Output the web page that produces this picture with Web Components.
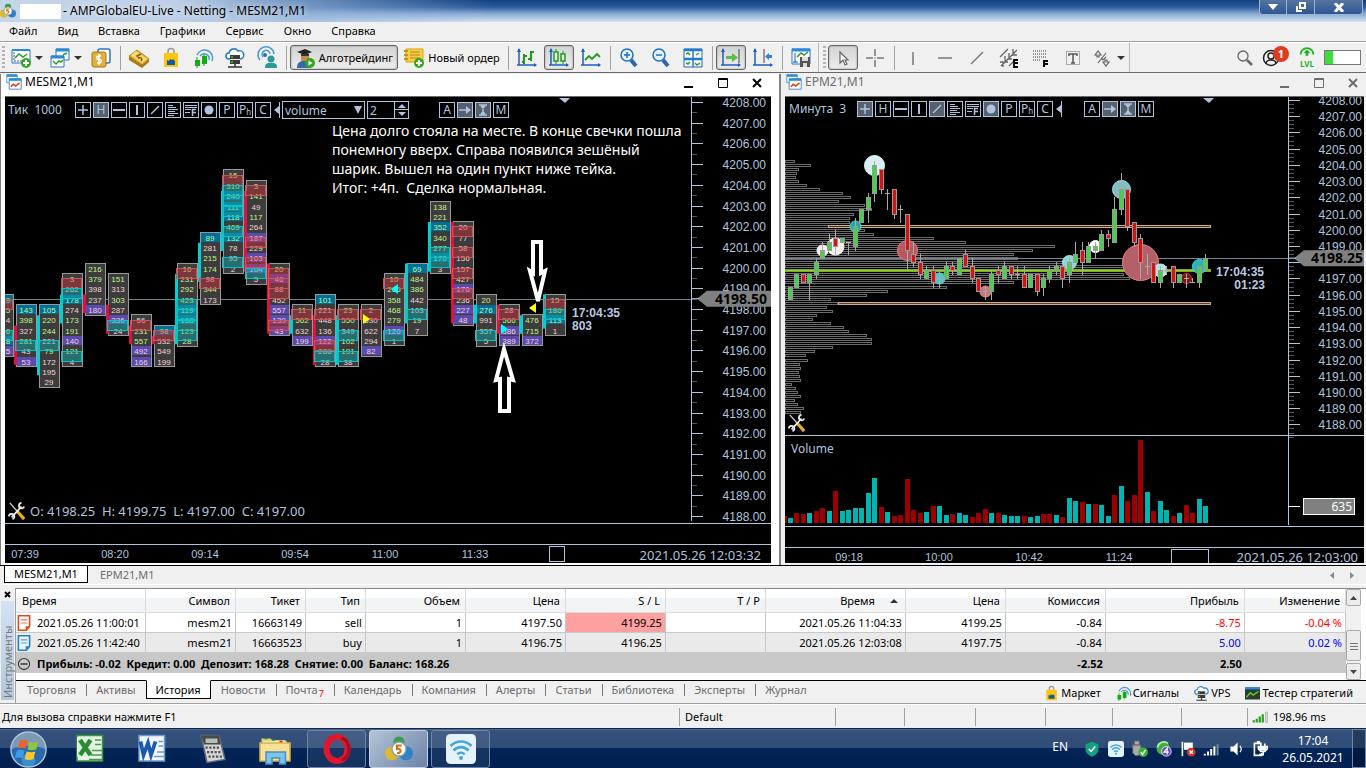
<!DOCTYPE html>
<html lang="ru">
<head>
<meta charset="utf-8">
<title>AMPGlobalEU-Live - Netting - MESM21,M1</title>
<style>
  html, body { margin: 0; height: 100%; }
  body { font: 11px/16px "Noto Sans", "Open Sans", sans-serif; color: #000; background: #f0f0f0; }
</style>
</head>
<body>
<terminal-app></terminal-app>

<script>
// ---------- icons ----------
const cloud = '<path d="M5 11H4a3 3 0 0 1 0-6 5 5 0 0 1 9-2 4 4 0 0 1 3 8h-1" fill="#fff" stroke="#1f7cc4" stroke-width="1.5"/><path d="M5 7h10v4H5zM5 12h10v4H5z" fill="#3c3c3c"/><path d="M6 9h2M6 14h2" stroke="#3c3" stroke-width="1.5"/><path d="M10 16v3M3 19h14" stroke="#333" stroke-width="1.5"/>';
const bag = '<path d="M7 6V3.500a3 3 0 0 1 6 0V6" fill="none" stroke="#999" stroke-width="1.500"/><path d="M3 5h14v14H3z" fill="#fcc60e"/><path d="M6 17v-5l2 1 1-2 2 1 1-1 2 2v4z" fill="#1458a8"/>';
const waves = '<path d="M4 7a8 8 0 0 1 15 6M7 8a5 5 0 0 1 9 4" fill="none" stroke="#4a9ad4" stroke-width="1.5"/>';
const plus = '<circle cx="15" cy="15" r="5" fill="#35a820"/><path d="M15 12v6M12 15h6" stroke="#fff" stroke-width="2"/>';
const axes = '<path d="M2 1v16M0 17h19" stroke="#1f5fc0" stroke-width="1.500"/><path d="M0 4l2-4 2 4zM17 15l3 2-3 2z" fill="#1f5fc0"/>';

const ICONS = {
  logo: '<circle cx="10" cy="5" r="4" fill="#3d9a50"/><circle cx="5" cy="13" r="5" fill="#dcb830"/><circle cx="15" cy="13" r="5" fill="#3280c8"/><circle cx="10" cy="10" r="5" fill="#fff" stroke="#7aa"/><path d="M12 7.500H8.500V10c3-1 4 3 0 3" fill="none" stroke="#e06a10" stroke-width="1.500"/>',
  newChart: '<path d="M1 2h18v13H1z" fill="#fff" stroke="#2a78c0"/><path d="M1 2h18" stroke="#2a8ad8" stroke-width="2"/><path d="M3 4v9h14" fill="none" stroke="#357" stroke-dasharray="2 1"/><path d="M4 10l4-4 4 3 4-3" fill="none" stroke="#2d9a22" stroke-width="1.500"/>' + plus,
  profiles: '<path d="M6 1h13v11H6z" fill="#fff" stroke="#2a78c0"/><path d="M6 2h13" stroke="#2a8ad8" stroke-width="3"/><path d="M1 8h13v11H1z" fill="#fff" stroke="#2a78c0"/><path d="M1 9h13" stroke="#2a8ad8" stroke-width="3"/><path d="M3 13l3 3 3-3 2 1 2-2M13 7l4-2" fill="none" stroke="#2d9a22" stroke-width="1.500"/>',
  dollar: '<rect x="7" y="1" width="12" height="14" rx="2" fill="#fff" stroke="#2a78c0" stroke-width="1.500"/><rect x="1" y="4" width="14" height="15" rx="2" fill="#e0b040" stroke="#a87808"/><path d="M10 8H7.500a1.500 1.500 0 0 0 0 3.500h1a1.500 1.500 0 0 1 0 3.500H6M8 6v11" fill="none" stroke="#fff" stroke-width="1.500"/>',
  gold: '<path d="M0 8l8-6 12 9-7 6z" fill="#e8bc40" stroke="#b88410"/><path d="M0 8v4l13 8v-3zM13 17v3l7-6v-3z" fill="#a87818"/><path d="M2 7l5-4 11 8-5 4z" fill="#f4d878"/><path d="M12 6L8 8l2 2c2-1 4 1 2 3" fill="none" stroke="#8a5a08" stroke-width="1.500"/>',
  bag, cloud,
  waves: waves + '<path d="M4 9v11M11 6v12" stroke="#1da01d"/><path d="M2 12h5v6H2zM9 8h5v8H9z" fill="#10b010"/>',
  people: '<path d="M3 12A8 8 0 1 1 17 6M6 9a4 4 0 1 1 7-3" fill="none" stroke="#4a9ad4" stroke-width="1.500"/><circle cx="8" cy="7" r="2" fill="#2470b0"/><circle cx="14" cy="11" r="3.500" fill="#2c9a94"/><path d="M8 20c0-5 2-5 6-5s6 0 6 5z" fill="#2c9a94"/>',
  algo: '<path d="M2 4l8-3 7 3-7 3z" fill="#222"/><path d="M6 6h8v5a4 4 0 0 1-8 0z" fill="#c98a50"/><path d="M2 20c0-6 3-7 8-7s6 2 6 7z" fill="#3568b0"/><path d="M6 6l8 0v2H6z" fill="#333"/><circle cx="15" cy="15" r="5" fill="#35a820"/><path d="M13.500 12.500v5l4-2.500z" fill="#fff"/>',
  order: '<path d="M2 1h17v13H2z" fill="#f8cf4a" stroke="#d8a010"/><path d="M0 3h4M0 7h4M0 11h4" stroke="#c89010" stroke-width="2"/><path d="M6 4h10M6 7h10M6 10h10" stroke="#b08010"/>' + plus,
  bars: axes + '<path d="M7 6v10M5 14h2M7 8h3M14 3v10M11 11h3M14 4h3" stroke="#1f9a1f" stroke-width="2" fill="none"/>',
  candles: axes + '<path d="M7 1v15M14 3v13" stroke="#1f9a1f"/><path d="M5 4h4v9H5zM12 6h4v7h-4z" fill="#eee" stroke="#1f9a1f" stroke-width="1.500"/>',
  line: axes + '<path d="M4 12l4-4 3 3 5-5 3 3" fill="none" stroke="#1f9a1f" stroke-width="1.800"/>',
  zoomIn: '<path d="M12 12l5 6" stroke="#2c68a8" stroke-width="4"/><circle cx="8" cy="7" r="6" fill="#e4f2fc" stroke="#2470c0" stroke-width="1.500"/><path d="M8 4v6M5 7h6" stroke="#2470c0" stroke-width="1.500"/>',
  zoomOut: '<path d="M12 12l5 6" stroke="#2c68a8" stroke-width="4"/><circle cx="8" cy="7" r="6" fill="#e4f2fc" stroke="#2470c0" stroke-width="1.500"/><path d="M5 7h6" stroke="#2470c0" stroke-width="1.500"/>',
  tile: '<path d="M1 1h18v18H1z" fill="#fff" stroke="#1f68b8"/><path d="M1 2h18M1 11h18" stroke="#1f78d0" stroke-width="2.500"/><path d="M10 1v18" stroke="#1f78d0" stroke-width="1.500"/><path d="M3 6l2-1 2 2M13 7l3-2M3 15l2 1 2-2M12 15l2 2 3-2" fill="none" stroke="#2d9a22" stroke-width="1.500"/>',
  scroll: axes + '<path d="M18 1v14" stroke="#444"/><path d="M5 8h6V5l6 4.500-6 4.500v-3H5z" fill="#58c040"/>',
  shift: axes + '<path d="M11 1v14" stroke="#444"/><path d="M19 7h-3V5l-4 3.500 4 3.500v-2h3z" fill="#3a80d8"/>',
  save: '<path d="M1 1h18v15H1z" fill="#fff" stroke="#2a78c0"/><path d="M1 2h18" stroke="#2a8ad8" stroke-width="3"/><path d="M4 5v10M2 14h5" stroke="#1f5fc0"/><path d="M6 9l4-4 3 2 4-3" fill="none" stroke="#2d9a22" stroke-width="1.500"/><path d="M9 9h10v10H9z" fill="#555"/><path d="M11 9h6v4h-6zM12 15h4v4h-4z" fill="#ddd"/>',
  cursor: '<path d="M7 4v11l3-3 2 5 2-1-2-4h3z" fill="#fff" stroke="#666" stroke-width="1.200"/>',
  cross: '<path d="M10 1v7M10 12v7M1 10h7M12 10h7M9.500 10h1" stroke="#777" stroke-width="1.500"/>',
  vline: '<path d="M10 4v13" stroke="#777" stroke-width="1.500"/>',
  hline: '<path d="M3 10h14" stroke="#777" stroke-width="1.500"/>',
  trend: '<path d="M4 16L16 4" stroke="#777" stroke-width="1.500"/>',
  channel: '<path d="M1 9l8-8M2 18L18 2M10 18l6-6M1 14h3v5M6 8v6h3M10 5v6h3M14 1v6h4" fill="none" stroke="#666" stroke-width="1.300"/><path d="M19 12h-4v7h4M15 15h4" fill="none" stroke="#000" stroke-width="1.800"/>',
  fibo: '<path d="M2 3h14M2 6h14M2 9h14M2 12h8" stroke="#777" stroke-width="1.500" stroke-dasharray="1 1"/><path d="M17 13h-4v6M13 16h4" fill="none" stroke="#000" stroke-width="2"/>',
  text: '<path d="M3.500 3.500h13v13h-13z" fill="none" stroke="#666" stroke-dasharray="1 1"/><path d="M6 8V6h8v2M10 6v9M8 15h4" fill="none" stroke="#555" stroke-width="1.500"/>',
  shapes: '<path d="M2 7l3-4 3 4H6v2H4V7zM12 12h2v2h2l-3 4-3-4h2zM5 15L13 5M8 10l2 2 3-3" fill="none" stroke="#666" stroke-width="1.200"/>',
  search: '<circle cx="8" cy="8" r="5" fill="none" stroke="#666" stroke-width="1.300"/><path d="M12 12l5 5" stroke="#666" stroke-width="2.500"/>',
  user: '<circle cx="8" cy="10" r="7.500" fill="none" stroke="#222" stroke-width="1.500"/><circle cx="8" cy="8" r="3" fill="none" stroke="#222" stroke-width="1.500"/><path d="M3 15c1-4 9-4 10 0" fill="none" stroke="#222" stroke-width="1.500"/>',
  lvl: '<path d="M1 12a9 9 0 0 1 18 0" fill="none" stroke="#1eb41e" stroke-width="2.500"/><path d="M10 5l5 5h-3v4H8v-4H5z" fill="#1eb41e"/>',
  chartTab: '<path d="M1 1h13v10H1z" fill="#fff" stroke="#2a8ad8"/><path d="M1 2h13" stroke="#2a8ad8" stroke-width="3"/><path d="M4 6h15v13H4z" fill="#fff" stroke="#2a78c0"/><path d="M4 7h15" stroke="#2a8ad8" stroke-width="3"/><path d="M6 16l3-3 3 2 5-4" fill="none" stroke="#e04818" stroke-width="2"/>',
  tester: '<path d="M0 2h20v16H0z" fill="#2c3c34"/><path d="M0 3h20" stroke="#2a8ad8" stroke-width="3"/><path d="M2 15l5-6 4 3 7-5" fill="none" stroke="#6c2" stroke-width="2"/>',
  tools: '<path d="M2 1l8 9" stroke="#ccc" stroke-width="1.500"/><path d="M10 10l8 9" stroke="#e8b020" stroke-width="3.500"/><path d="M4 17L15 5" stroke="#eee" stroke-width="2"/><path d="M18 5a3 3 0 1 1-3-4M1 16a3 3 0 1 1 4 3" fill="none" stroke="#eee" stroke-width="2"/>',
  signal: '<path d="M1 15v3M5 13v5M9 10v8M13 7v11" stroke="#2aa020" stroke-width="3"/><path d="M17 4h2v14h-2z" fill="none" stroke="#999"/>',
  sellDoc: '<path d="M3 1h14v13l-4 5H3z" fill="#fff" stroke="#e04818" stroke-width="2"/><path d="M6 6h8M6 10h8" stroke="#e87850" stroke-width="1.500"/><path d="M12 19v-5h5z" fill="#e04818"/>',
  buyDoc: '<path d="M3 1h14v13l-4 5H3z" fill="#e8f4fc" stroke="#2a80c0" stroke-width="2"/><path d="M6 6h8M6 10h8" stroke="#5aa0d0" stroke-width="1.500"/><path d="M12 19v-5h5z" fill="#2a80c0"/>',
  minus: '<circle cx="10" cy="10" r="8" fill="none" stroke="#333" stroke-width="1.500"/><path d="M5 10h10" stroke="#333" stroke-width="2"/>',
  excel: '<path d="M2 1h17v17H2z" fill="#e8f4e4" stroke="#389838"/><path d="M2 2h11v13H2z" fill="#dff0dc"/><path d="M4 4l7 10M11 4L4 14" stroke="#2d8a34" stroke-width="3"/><path d="M14 4h4M14 7h4M12 11h7M11 14h8M10 17h9" stroke="#4a9a50"/>',
  word: '<path d="M2 1h17v17H2z" fill="#f0f6fc" stroke="#6a9ad0"/><path d="M3 5l2 9 3-8 2 8 3-9" fill="none" stroke="#1c58ac" stroke-width="2.500"/><path d="M15 5h3M15 8h3M14 12h5M12 15h7" stroke="#6a9ad0"/>',
  calc: '<path d="M2 1h12l4 16-12 2z" fill="#d4d6d8" stroke="#667"/><path d="M2 1h12l1 6H4z" fill="#45484c"/><path d="M5 3h8v3H5z" fill="#b4c0b0"/><path d="M5 9h10M6 12h10M7 15h10" stroke="#555" stroke-width="1.500" stroke-dasharray="1.500 1"/>',
  folder: '<path d="M1 3h6l1 1h9v13H1z" fill="#e8cc70"/><path d="M2 5h16v3H2z" fill="#fff"/><path d="M0 6h20v12H0z" fill="#f8e094" stroke="#d0b050"/><path d="M4 20v-8h13v8h-4v-4H8v4z" fill="#7cc4ec" stroke="#4a90c0"/><path d="M3 3h2M8 4h2" stroke="#2a8a2a"/><path d="M13 5h2" stroke="#c22"/>',
  opera: '<ellipse cx="10" cy="10" rx="7" ry="8" fill="none" stroke="#e0182c" stroke-width="4"/><path d="M13 3a5 7 0 0 1 0 14" fill="none" stroke="#a80c1c" stroke-width="2"/>',
  wifi: '<rect x="0" y="0" width="20" height="20" rx="3" fill="#e4f2fa"/><path d="M3 8c4-4 10-4 14 0M5 11c3-3 7-3 10 0M7.500 13.500c2-1.500 3-1.500 5 0" fill="none" stroke="#4aa4dc" stroke-width="1.700"/><circle cx="10" cy="16" r="1.300" fill="#4aa4dc"/>',
  orb: '<circle cx="20" cy="20" r="18" fill="#2a6aa8"/><path d="M2 20a18 18 0 0 1 36 0c-10-5-26-5-36 0z" fill="#7c98b4"/><circle cx="20" cy="31" r="7" fill="#40b8f0" opacity=".5"/><circle cx="20" cy="20" r="18" fill="none" stroke="#a8c4dc" stroke-width="1.500"/><path d="M11 11c3-1.500 5-1 8 0l-2 8c-3-1-5-1-8 0z" fill="#f0602c"/><path d="M21 12c3 1 5 1 9 0l-2 8c-4 1-6 1-9 0z" fill="#8cc83c"/><path d="M8 21c3-1 5-1 8 0l-2 8c-3-1-5-1-8 0z" fill="#3c9cec"/><path d="M18 22c4 1 6 1 9 0l-2 8c-3 1-6 1-9 0z" fill="#fcc830"/>',
  shield: '<path d="M10 1l8 3v7c0 5-5 7-8 9-3-2-8-4-8-9V4z" fill="#12a080"/><path d="M6 10l3 3 5-6" fill="none" stroke="#fff" stroke-width="2"/>',
  usb: '<path d="M3 0h6v5H3zM1 5h10v10l-3 3H4l-3-3z" fill="#aaa" stroke="#666"/><circle cx="14" cy="14" r="6" fill="#38b030"/><path d="M11 14l2 3 4-6" fill="none" stroke="#fff" stroke-width="1.800"/>',
  four: '<circle cx="9" cy="9" r="8.500" fill="#40b040"/><path d="M2 8a8 8 0 0 1 13-5" fill="none" stroke="#b8f0b0" stroke-width="2"/><circle cx="13" cy="13" r="6" fill="#6848c0" stroke="#fff"/><path d="M14 17V9l-4 5h6" fill="none" stroke="#fff" stroke-width="1.500"/>',
  flag: '<path d="M3 1v18" stroke="#fff" stroke-width="2"/><path d="M5 2h11v9H5z" fill="#fff"/><circle cx="14" cy="14" r="5.500" fill="#d83020"/><path d="M12 12l4 4M16 12l-4 4" stroke="#fff" stroke-width="1.800"/>',
  net: '<path d="M1 18v-2M5 18v-5M9 18V10M13 18V7" stroke="#fff" stroke-width="2.500"/><path d="M17 18V4" stroke="#789" stroke-width="2.500"/>',
  speaker: '<path d="M3 7h4l5-5v16l-5-5H3z" fill="#fff"/><path d="M15 6q3 4 0 8" fill="none" stroke="#fff" stroke-width="1.500"/>',
  plug: '<path d="M12 3H3v15h9v-3M6 1h4" fill="none" stroke="#fff" stroke-width="2"/><path d="M8 7h11v3l-3 3h-5l-3-3zM11 3v4M16 3v4M14 13v4h-5" fill="none" stroke="#fff" stroke-width="2"/><path d="M9 7h9v3l-2 2h-5l-2-2z" fill="#fff"/>'
};

class MtIcon extends HTMLElement {
  connectedCallback() {
    const name = this.getAttribute('name');
    const box = name === 'orb' ? 40 : 20;
    this.attachShadow({ mode: 'open' }).innerHTML = `
      <style>
        :host { display: inline-flex; width: var(--icon, 20px); height: var(--icon, 20px); flex: none; }
        svg { width: 100%; height: 100%; display: block; overflow: visible; }
      </style>
      <svg viewBox="0 0 ${box} ${box}" fill="none" aria-hidden="true">${ICONS[name]}</svg>`;
  }
}
customElements.define('mt-icon', MtIcon);

// ---------- title and menu ----------
class TitleBar extends HTMLElement {
  connectedCallback() {
    this.attachShadow({ mode: 'open' }).innerHTML = `
      <style>
        :host {
          display: flex; height: 22px; align-items: center; padding-left: 0;
          font-size: 12px;
          background:
            linear-gradient(90deg, #c6d6e8 0, #bccfe6 13%, rgba(150, 180, 218, .7) 22%, rgba(120, 160, 210, 0) 36%),
            linear-gradient(#12407f 0, #2b5b9c 32%, #86a9d2 62%, #d4e3f2 100%);
        }
        mt-icon { --icon: 16px; }
        .name { width: 41px; height: 15px; margin: 0 2px 0 4px; background: #fff; }
        .title { flex: 1; text-shadow: 0 0 6px #fff; }
        .buttons { display: flex; align-self: flex-start; margin-right: 3px; height: 15px; }
        button {
          padding: 0; width: 28px; border: 1px solid #9ab4d6; border-top: 0; border-left-width: 0;
          background: linear-gradient(#56759f, #2d5692); display: grid; place-items: center;
        }
        button:first-child { border-left-width: 1px; border-radius: 0 0 0 4px; }
        button:last-child { width: 48px; border-radius: 0 0 4px 0; }
      </style>
      <mt-icon name="logo"></mt-icon><span class="name"></span>
      <span class="title">- AMPGlobalEU-Live - Netting - MESM21,M1</span>
      <div class="buttons">
        <button aria-label="Свернуть"><svg width="10" height="6"><path d="M0 0h10L5 6z" fill="#fff"/></svg></button>
        <button aria-label="Восстановить"><svg width="10" height="10" fill="none" stroke="#fff" stroke-width="2"><path d="M4 1h5v5H4zM1 4v5h5"/></svg></button>
        <button aria-label="Закрыть"><svg width="10" height="9" stroke="#fff" stroke-width="3"><path d="M1 0l8 9M9 0L1 9"/></svg></button>
      </div>`;
  }
}
customElements.define('title-bar', TitleBar);

class MenuBar extends HTMLElement {
  connectedCallback() {
    const items = ['Файл', 'Вид', 'Вставка', 'Графики', 'Сервис', 'Окно', 'Справка'];
    this.attachShadow({ mode: 'open' }).innerHTML = `
      <style>
        :host { display: flex; gap: 20px; height: 19px; padding-left: 9px; align-items: center; border-bottom: 1px solid #a0a0a0; }
        button { border: 0; padding: 0 0 1px; background: none; font: inherit; color: #000; }
      </style>
      ${items.map(i => `<button>${i}</button>`).join('')}`;
  }
}
customElements.define('menu-bar', MenuBar);

// ---------- toolbar ----------
class ToolBar extends HTMLElement {
  connectedCallback() {
    const b = (icon, label, cls = '') => `<button class="${cls}" aria-label="${label}"><mt-icon name="${icon}"></mt-icon></button>`;
    const drop = (icon, label) => `<button class="drop" aria-label="${label}"><mt-icon name="${icon}"></mt-icon><i></i></button>`;
    const sep = '<span class="sep"></span>';
    this.attachShadow({ mode: 'open' }).innerHTML = `
      <style>
        :host { display: flex; height: 29px; align-items: center; border-top: 1px solid #fff; border-bottom: 1px solid #696969; white-space: nowrap; }
        .group { display: flex; gap: 2px; align-items: center; border-right: 1px solid #bbb; height: 100%; padding: 0 2px; }
        .group + .group { padding-left: 4px; }
        .grip { width: 3px; height: 24px; background: repeating-linear-gradient(#b4b4b4 0 2px, transparent 2px 4px); }
        button {
          box-sizing: border-box; width: 30px; height: 25px; padding: 0; border: 1px solid transparent;
          background: none; display: flex; align-items: center; justify-content: center; font: inherit; color: #000;
        }
        .drop { width: 37px; gap: 4px; }
        .drop:first-of-type { margin-left: 1px; }
        .drop i { border: 4px solid transparent; border-top-color: #333; border-bottom: 0; }
        .on { border: 1px solid #666; border-radius: 3px; background: linear-gradient(#d4d4d4, #ececec); box-shadow: inset 0 0 2px #888; }
        .label { width: 108px; gap: 4px; }
        .order { width: 104px; }
        .sep { width: 1px; height: 24px; margin: 0 1px 0 2px; background: #a0a0a0; }
        .right { margin-left: auto; display: flex; align-items: center; gap: 5px; padding-right: 5px; }
        .right button { width: 24px; }
        .right .user { position: relative; width: 28px; justify-content: flex-start; }
        .badge { position: absolute; right: 0; top: 0; width: 16px; height: 16px; border-radius: 8px; background: #e03a20; color: #fff; font: bold 11px/16px "Noto Sans", sans-serif; text-align: center; }
        .right .lvl { flex-direction: column; justify-content: flex-start; color: #1eb41e; font: bold 8px/8px "Noto Sans", sans-serif; }
        .lvl mt-icon { --icon: 18px; height: 14px; }
        .meter { width: 35px; height: 13px; border: 1px solid #777; background: linear-gradient(90deg, #3fdc3f 24%, #fff 24%); }
      </style>
      <div class="group">
        <span class="grip"></span>
        ${drop('newChart', 'Новый график')}${drop('profiles', 'Профили')}${b('dollar', 'Символы')}${sep}
        ${b('gold', 'MQL5')}${b('bag', 'Маркет')}${b('waves', 'Сигналы')}${b('cloud', 'VPS')}${b('people', 'Сообщество')}${sep}
        <button class="label on"><mt-icon name="algo"></mt-icon>Алготрейдинг</button>
        <button class="label order"><mt-icon name="order"></mt-icon>Новый ордер</button>${sep}
        ${b('bars', 'Бары')}${b('candles', 'Свечи', 'on')}${b('line', 'Линия')}${sep}
        ${b('zoomIn', 'Увеличить')}${b('zoomOut', 'Уменьшить')}${b('tile', 'Окна плиткой')}${sep}
        ${b('scroll', 'Автопрокрутка', 'on')}${b('shift', 'Сдвиг графика')}${sep}
        ${b('save', 'Шаблоны')}
      </div>
      <div class="group">
        <span class="grip"></span>
        ${b('cursor', 'Курсор', 'on')}${b('cross', 'Перекрестие')}${sep}
        ${b('vline', 'Вертикальная линия')}${b('hline', 'Горизонтальная линия')}${b('trend', 'Трендовая линия')}${b('channel', 'Канал')}${b('fibo', 'Фибоначчи')}${b('text', 'Текст')}${drop('shapes', 'Фигуры')}
      </div>
      <div class="right">
        ${b('search', 'Поиск')}
        <button class="user" aria-label="Аккаунт"><mt-icon name="user"></mt-icon><span class="badge">1</span></button>
        <button class="lvl"><mt-icon name="lvl"></mt-icon>LVL</button>
        <span class="meter"></span>
      </div>`;
  }
}
customElements.define('tool-bar', ToolBar);

// ---------- chart window ----------
class ChartWindow extends HTMLElement {
  connectedCallback() {
    this.attachShadow({ mode: 'open' }).innerHTML = `
      <style>
        :host { display: flex; flex-direction: column; min-width: 0; background: #f0f0f0; color: #6d6d6d; padding: 0 2px 2px 4px; border-left: 1px solid #808080; }
        :host([active]) { background: #fff; color: #000; padding-right: 8px; border-right: 1px solid #808080; }
        header { display: flex; height: 22px; align-items: center; font-size: 12px; border-bottom: 1px solid #696969; }
        header mt-icon { --icon: 16px; margin: 0 3px 6px 1px; }
        b { flex: 1; font-weight: normal; padding-bottom: 6px; }
        nav { display: flex; gap: 22px; padding: 0 5px 5px 0; }
        :host([active]) nav { padding-right: 8px; }
        button { border: 0; background: none; padding: 0; width: 12px; height: 12px; color: inherit; }
        svg { display: block; }
        ::slotted(*) { flex: 1; min-height: 0; }
      </style>
      <header>
        <mt-icon name="chartTab"></mt-icon><b>${this.getAttribute('caption')}</b>
        <nav>
          <button aria-label="Свернуть"><svg width="12" height="12" stroke="currentColor" stroke-width="2"><path d="M1 10h9"/></svg></button>
          <button aria-label="Развернуть"><svg width="12" height="12" fill="none" stroke="currentColor"><path d="M1.500 1.500h9v9h-9zM1 2.500h10"/></svg></button>
          <button aria-label="Закрыть"><svg width="12" height="12" stroke="currentColor" stroke-width="2"><path d="M2 2l8 8M10 2l-8 8"/></svg></button>
        </nav>
      </header>
      <slot></slot>`;
  }
}
customElements.define('chart-window', ChartWindow);

// row of small drawing buttons over the chart
class ChartTools extends HTMLElement {
  connectedCallback() {
    const on = (this.getAttribute('on') || '').split(' ');
    const g = d => `<svg width="14" height="14" fill="none" stroke="currentColor" stroke-width="1.500">${d}</svg>`;
    const tools = {
      plus: g('<path d="M7 2v10M2 7h10"/>'), H: 'H',
      hor: g('<path d="M1 7h12" stroke-width="2"/>'), ver: g('<path d="M7 2v10" stroke-width="2"/>'), diag: g('<path d="M3 11l8-8"/>'),
      prof: g('<path d="M2 2.500h5M2 4.500h8M2 6.500h10M2 8.500h7M2 10.500h10M2 12.500h6" stroke-width="1"/>'),
      fib: g('<path d="M1 2.500h12M1 4.500h12M1 6.500h6M1 9.500h5" stroke-width="1"/><path d="M12 6.500H8.500V13M9 9.500h3"/>'),
      dot: g('<circle cx="7" cy="7" r="4.500" fill="currentColor" stroke="none"/>'),
      P: 'P', Ph: 'P<small>h</small>', C: 'C'
    };
    const right = { A: 'A', arrow: g('<path d="M1 7h8"/><path d="M8 3l5 4-5 4z" fill="currentColor" stroke="none"/>'), I: g('<path d="M3 2h8M3 12h8M7 2v10M5 3l2 2 2-2M5 11l2-2 2 2"/>'), M: 'M' };
    const draw = set => Object.keys(set).map(k => `<button aria-label="${k}" class="${on.includes(k) ? 'on' : ''}">${set[k]}</button>`).join('');
    this.attachShadow({ mode: 'open' }).innerHTML = `
      <style>
        :host { position: absolute; left: 3px; top: 4px; display: flex; align-items: center; color: #b0c4de; font-size: 12px; --gap: 30px; }
        .period { width: 67px; white-space: pre; }
        :host([narrow]) { left: 4px; --gap: 20px; }
        :host([narrow]) .period { width: 68px; }
        .set { display: flex; gap: 2px; }
        button { box-sizing: border-box; width: 16px; height: 16px; padding: 0; border: 1px solid #b0c4de; background: #000; color: #b0c4de; font: 12px/14px "Noto Sans", sans-serif; display: flex; justify-content: center; align-items: center; }
        button.on { background: #56616f; }
        small { font-size: 8px; align-self: flex-end; line-height: 10px; }
        .more { width: 7px; margin: 0 2px; border-width: 0 1px 0 0; }
        select, input { box-sizing: border-box; height: 18px; border: 1px solid #b0c4de; background: #000; color: #b0c4de; font: 12px "Noto Sans", sans-serif; border-radius: 0; padding: 0; margin: 0; outline: 0; }
        select { width: 83px; appearance: none; padding-left: 2px; }
        .pick { position: relative; display: flex; }
        .pick svg { position: absolute; right: 3px; top: 5px; pointer-events: none; }
        input { width: 28px; padding-left: 2px; margin-left: 2px; }
        .spin { display: grid; }
        .spin button { width: 14px; height: 9px; border-left: 0; }
        .spin button + button { border-top: 0; }
        .last { margin-left: var(--gap); }
      </style>
      <span class="period">${this.getAttribute('period')}</span>
      <div class="set">${draw(tools)}</div>
      <button class="more" aria-label="Скрыть"><svg width="5" height="8"><path d="M5 0v8L0 4z" fill="#b0c4de"/></svg></button>
      <slot></slot>
      ${this.hasAttribute('narrow') ? '' : `
      <span class="pick"><select aria-label="Источник"><option>volume</option></select><svg width="8" height="8"><path d="M0 0h8L4 8z" fill="#b0c4de"/></svg></span>
      <input aria-label="Размер" value="2">
      <span class="spin"><button aria-label="Больше"><svg width="8" height="4"><path d="M0 4l4-4 4 4z" fill="#b0c4de"/></svg></button><button aria-label="Меньше"><svg width="8" height="4"><path d="M0 0l4 4 4-4z" fill="#b0c4de"/></svg></button></span>`}
      <div class="set last">${draw(right)}</div>`;
  }
}
customElements.define('chart-tools', ChartTools);

const CHART_CSS = `
  :host { display: block; position: relative; background: #000; overflow: hidden; }
  svg.plot { display: block; width: 100%; height: 100%; font-family: "Liberation Sans", sans-serif; font-size: 12px; fill: #b0c4de; }
  .line { stroke: #b0c4de; }
  .ui { font-family: "Noto Sans", sans-serif; }
  .time { font-size: 11px; text-anchor: middle; }
  .clock { font-weight: bold; font-size: 12px; fill: #b8cbe4; }
  .dark { fill: #000; }`;

// price scale; drawn leftwards from the right edge
function scale({ y, step, axisX, bottom, tag, inset }) {
  let out = `<path class="line" d="M-${axisX - .5} 0V${bottom}"/>`;
  for (let p = 4208; p >= 4188; p--) {
    const py = Math.round(y(p)) + .5;
    out += `<path class="line" d="M-${axisX} ${py}h12"/>`;
    // the price tag covers a label that is nearer than half a point
    if (Math.abs(p - tag) >= .5) out += `<text x="-${inset}" y="${py + 4}" text-anchor="end">${p}.00</text>`;
    for (let k = 1; k < step; k++) {
      const q = Math.round(y(p - k / step)) + .5;
      if (q < bottom) out += `<path d="M-${axisX - 1} ${q}h5" stroke="#555"/>`;
    }
  }
  const t = y(+tag);
  out += `<path d="M-${axisX - 6} ${t}l10 -8H0v16H-${axisX - 16}z" fill="#808080"/><path d="M-${axisX} ${t}h8" class="line"/>
    <text class="ui" x="-${inset - 1}" y="${t + 5}" text-anchor="end" font-size="14" font-weight="bold" fill="#000">${tag}</text>`;
  return out;
}

// ---------- footprint chart ----------
// column: first row, cells "volume + g|p (text colour) + b|v (fill)", side bar [colour, from, to], zones
const CLUSTERS = [
  [3, '9gb 5g 4p 6g 8gb 5pv', null, 'r3.5 c6.5'],
  [4, '143gb 398g 327p 281g 43p 53pv', ['r', 5.6, 9.4], 'c7.5'],
  [4, '105gb 220g 244g 221p 79g 172p 195p 29p', ['c', 4.6, 10.4], 'c7.5'],
  [1, '3g 262p 178gb 274p 173g 191g 140pv 121g 4p', ['c', 2.6, 5.4], 'r1.5 c2.5 c8.5'],
  [0, '216g 379g 398p 237p 180pv', ['r', 2.6, 4.4], ''],
  [1, '151g 313p 303g 287p 336pv 24p', ['r', 3.6, 6.4], 'c5.5'],
  [5, '56p 231g 557g 492pv 166pv', ['r', 5.6, 7.4], 'r5.5'],
  [6, '98gb 532p 549p 199p', ['r', 6.6, 7.4], 'r6.5'],
  [0, '16g 231g 292g 423g 119gb 168gb 123g 28g', ['c', .6, 7.4], 'r.5 c3.5 c4.5 c5.5 c6.5'],
  [-3, '89gb 281p 215g 174g 98p 344g 173p', ['c', -2.4, 1.4], 'r1.5'],
  [-9, '15g 310g 240gb 111gb 118gb 469g 132gb 78p 95p 2p', ['c', -7.4, -1.6], 'r-8.5 c-7.5 c-6.5 c-5.5 c-3.5 c-.5'],
  [-8, '3g 141g 49p 117g 264p 187pv 229p 163pv 164pv 5p', ['r', -7.4, .4], 'r-7.5 r-2.5 r-.5 c.5'],
  [0, '20g 46pv 88p 452p 557pv 139pv 43pv', ['r', -.4, 6.4], 'r.5 r1.5 r2.5 r5.5'],
  [4, '11g 562g 632p 199pv', ['c', 4.6, 6.4], 'r4.5'],
  [3, '101gb 221p 448p 136p 122pv 286p 28p', ['r', 4.6, 9.4], 'r4.5 r7.5 c8.5'],
  [4, '23g 550g 349p 102g 191g 38p', ['c', 4.6, 9.4], 'r4.5 c6.5 c8.5'],
  [4, '2g 530p 622p 294p 82pv', null, 'r4.5'],
  [1, '10g 265g 358g 468g 279g 126pv 1p', null, 'r1.5 c6.5'],
  [0, '69gb 484g 386g 442p 103p 19g 7p', ['c', -.4, 5.4], 'c4.5'],
  [-6, '138g 221g 352gb 340g 277g 170gb 3p', ['c', -4.4, .4], 'c-1.5 c-.5'],
  [-4, '20p 77p 58p 156p 157p 427p 176pv 236p 227pv 48pv', ['r', -4.4, 5.4], 'r-3.5 r-1.5 r.5 r2.5'],
  [3, '20g 276gb 991p 357p 5p', ['c', 3.6, 5.4], 'c6.5'],
  [4, '28p 566g 586pv 389pv', ['r', 3.6, 6.4], 'r4.5'],
  [5, '476g 715g 372pv', ['c', 4.6, 6.4], ''],
  [3, '15g 186g 113gb 1p', ['c', 2.6, 5.9], 'r3.5 c4.5']
];

class FootprintChart extends HTMLElement {
  connectedCallback() {
    const y = p => 5 + (4208 - p) * 20.7;
    const row = r => y(4200 - r / 2);
    const fills = { b: '#00709a', v: '#5a4aae' };
    const zone = { r: ['#d8303c', '#c8555a'], c: ['#10b4b4', '#00c4c8'] };
    const clusters = CLUSTERS.map(([top, list, bar, zones], i) => {
      const x = Math.round(-12 + i * 23);
      const cells = list.split(' ');
      const t = Math.round(row(top) - 5), h = Math.round(cells.length * 10.35);
      let out = `<rect x="${x + .5}" y="${t + .5}" width="20" height="${h}" fill="#3c3c3c" stroke="#999"/>`;
      cells.forEach((c, k) => {
        const m = c.match(/(\d+)([gp])([bv]?)/);
        const cy = Math.round(row(top + k));
        if (m[3]) out += `<rect x="${x + 1}" y="${cy - 4}" width="19" height="9" fill="${fills[m[3]]}"/>`;
        out += `<text x="${Math.max(x + 10, 3)}" y="${cy + 4}" fill="${m[2] === 'g' ? '#c4f48c' : '#f4d4d4'}">${m[1]}</text>`;
      });
      if (bar) out += `<path d="M${x - .5} ${row(bar[1])}V${row(bar[2])}" stroke="${bar[0] === 'r' ? '#e01040' : '#00d0d0'}" stroke-width="3"/>`;
      zones.split(' ').filter(Boolean).forEach(z => {
        const [f, s] = zone[z[0]];
        out += `<rect x="${x - .5}" y="${Math.round(row(+z.slice(1))) - 4.500}" width="20" height="10" fill="${f}" fill-opacity=".42" stroke="${s}"/>`;
      });
      return out;
    }).join('');
    const times = ['07:39', '08:20', '09:14', '09:54', '11:00', '11:33'].map((t, i) => `<text class="time" x="${20 + i * 90}" y="461">${t}</text>`).join('');
    const note = ['Цена долго стояла на месте. В конце свечки пошла', 'понемногу вверх. Справа появился зешёный', 'шарик. Вышел на один пункт ниже тейка.', 'Итог: +4п.  Сделка нормальная.']
      .map((t, i) => `<text class="ui note" x="327" y="${39 + i * 19}">${t}</text>`).join('');
    this.attachShadow({ mode: 'open' }).innerHTML = `
      <style>${CHART_CSS}
        .cells { font-size: 8px; text-anchor: middle; }
        .note { font-size: 14px; fill: #fff; white-space: pre; }
        .ohlc { position: absolute; left: 3px; top: 405px; display: flex; gap: 4px; align-items: center; color: #b0c4de; font-size: 13px; white-space: pre; }
        .ohlc mt-icon { --icon: 18px; }
      </style>
      <svg class="plot">
        <path d="M0 202.500H3000" stroke="#78828f"/>
        <g class="cells">${clusters}</g>
        <path d="M358 217v10l7-5z" fill="#ff0"/><path d="M393 187v10l-7-5z" fill="#0ff"/>
        <path d="M496 227v10l7-5z" fill="#0ff"/><path d="M531 206v10l-7-5z" fill="#ff0"/>
        <path d="M528 145h8v31l4-2-7 30-8-30 3 2z" class="dark" stroke="#fff" stroke-width="4"/>
        <path d="M495 314h9v-32l4 1-9-31-8 31 4-1z" class="dark" stroke="#fff" stroke-width="4"/>
        ${note}
        <text class="clock" x="567" y="220">17:04:35</text><text class="clock" x="567" y="233">803</text>
        <path d="M554 1h11l-5 5z"/>
        <svg x="100%" overflow="visible">
          <rect class="dark" x="-79" y="0" width="79" height="426"/>
          ${scale({ y, step: 2, axisX: 80, bottom: 424, tag: '4198.50', inset: 5 })}
          <text class="ui" x="-10" y="463" text-anchor="end" font-size="13">2021.05.26 12:03:32</text>
        </svg>
        <path class="line" d="M0 426.500H3000M0 447.500H3000"/>
        ${times}
        <rect x="544.500" y="449.500" width="15" height="15" class="line dark"/>
      </svg>
      <chart-tools period="Тик  1000" on="H arrow I"></chart-tools>
      <div class="ohlc"><mt-icon name="tools"></mt-icon><span>O: 4198.25  H: 4199.75  L: 4197.00  C: 4197.00</span></div>`;
  }
}
customElements.define('footprint-chart', FootprintChart);

// ---------- candle chart ----------
// ticks down from 4208: colour, body top, body bottom, high, low; "d" is a doji
const CANDLES = `g 46 49 46 49|g 43 46 43 46|r 43 45 43 45|g 43 45 43 49|g 40 43 39 44|g 37 39 35 39|g 35 37 33 37|r 34 36 32 38|g 34 35 34 35|d 35 35 35 38
g 31 36 29 37|g 27 30 27 30|g 24 27 23 30|g 16 23 15 25|r 17 22 17 23|d 23 23 22 27|r 22 28 22 29|d 27 27 26 30|r 28 37 28 42|r 38 40 35 41
r 40 43 38 44|g 42 44 41 44|r 42 45 41 46|d 44 44 42 46|g 41 44 40 44|r 41 42 40 43|g 39 43 39 43|r 38 41 37 41|r 41 44 39 45|r 44 47 44 47
d 47 47 46 49|g 43 47 42 49|r 42 43 41 45|g 41 44 40 44|r 41 43 41 44|d 43 43 41 44|r 43 46 41 46|g 43 46 43 46|r 43 47 43 48|g 44 46 43 48
g 42 44 41 45|g 41 42 40 43|r 41 44 41 46|g 40 43 39 45|g 38 40 35 40|r 37 40 35 43|g 36 40 35 40|g 36 37 35 39|g 33 37 32 37|r 33 34 32 36
g 27 35 24 35|g 22 27 18 28|r 22 31 22 32|r 30 35 30 36|r 34 40 33 44|d 41 41 38 43|r 40 45 40 45|g 42 45 41 46|d 42 42 41 43|r 41 45 41 46
g 43 45 43 45|d 44 44 43 46|d 45 45 44 45|g 41 45 41 46|g 39 42 38 42`.split(/[|\n]/).map(s => s.split(' '));

const VOLUMES = 'r7 c5 r10 r9 c10 r12 r15 c12 r32 c12 c13 c15 c15 c30 c45 r16 c11 r7 r8 r44 r13 r10 c11 r17 c17 c8 r9 c10 c8 r6 r10 r14 c10 r10 c8 c7 c7 r7 c6 c7 r9 r9 c8 r6 c25 c22 r21 c19 r19 c18 c7 r28 c37 r22 r28 r83 c31 r12 c22 c13 r7 c10 r18 r10 c24 c17'.split(' ');

const PROFILE = [9, 25, 13, 11, 10, 13, 21, 34, 57, 65, 53, 79, 86, 68, 64, 64, 64, 79, 88, 148, 180, 269, 247, 228, 232, 290, 360, 318, 338, 344, 228, 161, 102, 81, 45, 52, 41, 47, 31, 27, 45, 58, 63, 81, 86, 86, 47, 29, 20, 22, 14, 15, 13, 14, 15, 6, 10, 12, 15, 9, 12, 18, 15];

class CandleChart extends HTMLElement {
  connectedCallback() {
    const y = p => 3 + (4208 - p) * 16.22;
    const ty = t => Math.round(y(4208 - t / 4));
    const cx = i => Math.round(5 + (i - 1) * 6.487);
    const candles = CANDLES.map(([k, t, b, hi, lo], n) => {
      const x = cx(n + 1);
      const wick = `<path d="M${x + .5} ${ty(+hi)}V${ty(+lo) + 1}" stroke="#aaa"/>`;
      if (k === 'd') return wick + `<path d="M${x - 2} ${ty(+t) + .5}h5" stroke="#aaa"/>`;
      return wick + `<rect x="${x - 1.500}" y="${ty(+t) + .5}" width="4" height="${ty(+b) - ty(+t)}" fill="${k === 'g' ? '#46d246' : '#dc1010'}" stroke="#999"/>`;
    }).join('');
    const profile = PROFILE.map((w, i) => `<rect x=".5" y="${ty(15 + i) - .5}" width="${w}" height="2" class="dark" stroke="#6c6c6c"/>`).join('');
    const volumes = VOLUMES.map((v, i) => `<rect x="${cx(i) - 2}" y="${426 - v.slice(1)}" width="5" height="${v.slice(1)}" fill="${v[0] === 'r' ? '#9c0000' : '#00b4b4'}"/>`).join('');
    // candle index, tick, radius, fill, ring
    const bubbles = [[6, 37, 5.5, '#fbeeee', '#fff'], [8, 36, 8.5, '#fbeeee', '#fff'], [11, 31, 5.5, '#2aa4a8', '#50e0e0'], [14, 16, 10, '#d8eef0', '#e8ffff'], [19, 37, 10, '#b85860', '#f08080'], [24, 44, 5.5, '#50c4c8', '#50e0e0'], [31, 47, 5.5, '#c87880', '#f09090'], [44, 40, 7, '#90d4d8', '#a0f0f0'],
      [48, 36, 6, '#fff', '#fff'], [52, 22, 9, '#80bcc0', '#90f0f0'], [55, 40, 18, '#b46068', '#f08080'], [58, 42, 6.5, '#b8e0e4', '#c0f0f0'], [62, 44, 5, '#701818', '#e03030'], [64, 41, 7, '#28b4b8', '#40e8e8']]
      .map(([i, t, r, f, s]) => `<circle cx="${cx(i) + .5}" cy="${ty(t) + .5}" r="${r}" fill="${f}" stroke="${s}"/>`).join('');
    const band = (t, x, c, f) => `<rect x="${x}.500" y="${ty(t) - .5}" width="${425 - x}" height="2" fill="${f}" stroke="${c}"/>`;
    const times = ['09:18', '10:00', '10:42', '11:24'].map((t, i) => `<text class="time" x="${64 + i * 90}" y="464">${t}</text>`).join('');
    this.attachShadow({ mode: 'open' }).innerHTML = `
      <style>${CHART_CSS}
        .settings { position: absolute; left: 3px; top: 317px; }
        .settings mt-icon { --icon: 18px; }
        .tag { fill: #808080; stroke: #fff; }
      </style>
      <svg class="plot">
        ${profile}
        ${band(31, 43, '#d0b080', '#3c2c28')}${band(50, 53, '#d0b080', '#5c3c30')}${band(42, 0, '#80a830', '#90d020')}
        <path d="M0 161.500H3000" stroke="#78869c"/>
        ${bubbles}${candles}
        <text class="clock" x="431" y="179">17:04:35</text><text class="clock" x="480" y="192" text-anchor="end">01:23</text>
        <path d="M418 1h11l-5 5z"/>
        <text class="ui" x="6" y="356">Volume</text>
        ${volumes}
        <svg x="100%" overflow="visible">
          <rect class="dark" x="-75" y="0" width="75" height="338"/>
          ${scale({ y, step: 4, axisX: 76, bottom: 428, tag: '4198.25', inset: 2 })}
          <path d="M-76 409.500h12" stroke="#fff"/>
          <rect class="tag" x="-60.500" y="401.500" width="51" height="16"/>
          <text class="ui" x="-12" y="414" text-anchor="end" fill="#fff">635</text>
          <text class="ui" x="-6" y="465" text-anchor="end" font-size="13">2021.05.26 12:03:00</text>
        </svg>
        <path class="line" d="M0 338.500H3000M0 429.500H3000M0 450.500H3000"/>
        ${times}
        <rect x="386.500" y="452.500" width="37" height="14" class="line dark"/>
      </svg>
      <chart-tools narrow period="Минута  3" on="plus diag dot arrow I"></chart-tools>
      <div class="settings"><mt-icon name="tools"></mt-icon></div>`;
  }
}
customElements.define('candle-chart', CandleChart);

// ---------- chart tabs ----------
class ChartTabs extends HTMLElement {
  connectedCallback() {
    this.attachShadow({ mode: 'open' }).innerHTML = `
      <style>
        :host { display: flex; height: 18px; border-top: 1px solid #000; padding-left: 4px; border-bottom: 1px solid #fff; }
        button { font: inherit; line-height: 16px; border: 0; background: none; color: #6d6d6d; padding: 0 12px; height: 17px; }
        .on { background: #fff; color: #000; border: 1px solid #000; border-width: 0 1px 1px; padding: 0 9px; }
        .arrows { margin-left: auto; display: flex; gap: 12px; align-items: center; padding-right: 10px; }
        .arrows button { padding: 0; width: 8px; }
      </style>
      <button class="on">MESM21,M1</button><button>EPM21,M1</button>
      <div class="arrows">
        <button aria-label="Назад"><svg width="4" height="7"><path d="M4 0v7L0 3.500z" fill="#888"/></svg></button>
        <button aria-label="Вперёд"><svg width="4" height="7"><path d="M0 0v7l4-3.500z" fill="#888"/></svg></button>
      </div>`;
  }
}
customElements.define('chart-tabs', ChartTabs);

// ---------- history ----------
class HistoryTable extends HTMLElement {
  connectedCallback() {
    const cols = [['Время', 130], ['Символ', 90], ['Тикет', 70], ['Тип', 60], ['Объем', 100], ['Цена', 100], ['S / L', 100], ['T / P', 100], ['Время', 140], ['Цена', 100], ['Комиссия', 100], ['Прибыль', 139], ['Изменение', 101]];
    const rows = [
      ['2021.05.26 11:00:01', 'mesm21', '16663149', 'sell', '1', '4197.50', '4199.25', '', '2021.05.26 11:04:33', '4199.25', '-0.84', '-8.75', '-0.04 %'],
      ['2021.05.26 11:42:40', 'mesm21', '16663523', 'buy', '1', '4196.75', '4196.25', '', '2021.05.26 12:03:08', '4197.75', '-0.84', '5.00', '0.02 %']
    ];
    this.attachShadow({ mode: 'open' }).innerHTML = `
      <style>
        :host { display: block; background: #fff; }
        table { width: 100%; table-layout: fixed; border-collapse: separate; border-spacing: 0; }
        th, td { box-sizing: border-box; padding: 0 3px; height: 20px; line-height: 19px; text-align: right; white-space: nowrap; border-right: 1px solid #c8c8c8; border-bottom: 1px solid #c8c8c8; font-weight: normal; }
        th { height: 24px; padding: 0 5px; border-color: #dcdcdc; background: linear-gradient(#fff 40%, #f2f4f6 40%); }
        th:first-child, td:first-child { text-align: left; }
        th:first-child { padding-left: 6px; }
        td:first-child mt-icon { --icon: 16px; vertical-align: -4px; margin: 0 5px 0 -3px; }
        tr.alt td { background: #eaeaea; }
        tr.sell .c6 { background: #ffa0a0; }
        .sell .c11, .sell .c12 { color: #f00; }
        .alt .c11, .alt .c12 { color: #00f; }
        tfoot td { background: #c8c8c8; border: 0; font-weight: bold; white-space: pre; }
        tfoot td:first-child mt-icon { --icon: 14px; margin: 0 6px 0 -2px; vertical-align: -3px; }
        .sort { display: inline-block; border: 4px solid transparent; border-bottom-color: #333; border-top: 0; margin: 0 2px 2px 15px; }
      </style>
      <table>
        <colgroup>${cols.map(c => `<col style="width:${c[1] / 13.3}%">`).join('')}</colgroup>
        <thead><tr>${cols.map((c, i) => `<th>${c[0]}${i === 8 ? '<i class="sort"></i>' : ''}</th>`).join('')}</tr></thead>
        <tbody>${rows.map((r, n) => `<tr class="${n ? 'alt' : 'sell'}">${r.map((v, i) => `<td class="c${i}">${i ? '' : `<mt-icon name="${n ? 'buyDoc' : 'sellDoc'}"></mt-icon>`}${v}</td>`).join('')}</tr>`).join('')}</tbody>
        <tfoot><tr>
          <td colspan="10"><mt-icon name="minus"></mt-icon>Прибыль: -0.02  Кредит: 0.00  Депозит: 168.28  Снятие: 0.00  Баланс: 168.26</td>
          <td>-2.52</td><td>2.50</td><td></td>
        </tr></tfoot>
      </table>`;
  }
}
customElements.define('history-table', HistoryTable);

class TerminalPanel extends HTMLElement {
  connectedCallback() {
    const tabs = ['Торговля', 'Активы', 'История', 'Новости', 'Почта', 'Календарь', 'Компания', 'Алерты', 'Статьи', 'Библиотека', 'Эксперты', 'Журнал'];
    const links = [['bag', 'Маркет'], ['waves', 'Сигналы'], ['cloud', 'VPS'], ['tester', 'Тестер стратегий']];
    this.attachShadow({ mode: 'open' }).innerHTML = `
      <style>
        :host { display: grid; grid-template-columns: 15px 1fr; margin-top: 3px; border-bottom: 1px solid #a0a0a0; }
        .side { display: flex; flex-direction: column; align-items: center; color: #777; }
        .side button { border: 0; padding: 0; background: none; width: 14px; height: 13px; display: grid; place-items: center; }
        .side span { flex: 1; box-sizing: border-box; width: 13px; writing-mode: vertical-rl; transform: rotate(180deg); line-height: 13px; background: linear-gradient(#b4c8dc, #d4e2f2); padding-top: 2px; margin-bottom: 3px; }
        .main { border-left: 1px solid #a0a0a0; border-top: 1px solid #888; min-width: 0; }
        .data { display: grid; grid-template-columns: 1fr 15px; background: #fff; padding-right: 5px; padding-bottom: 6px; border-bottom: 1px solid #000; }
        .bar { display: flex; flex-direction: column; margin-bottom: -6px; background: #f0f0f0; }
        .bar button { box-sizing: border-box; width: 15px; height: 17px; padding: 0; border: 1px solid #aaa; border-radius: 2px; background: #ececec; display: grid; place-items: center; }
        .bar .thumb { height: 31px; margin-top: 24px; margin-bottom: 2px; }
        .tabs { display: flex; align-items: flex-start; height: 22px; padding-left: 1px; }
        .tabs button { border: 0; background: none; font: inherit; line-height: 18px; color: #6d6d6d; padding: 0 10px; position: relative; white-space: nowrap; height: 18px; }
        .tabs button + button:not(.on):not(.on + button)::before { content: ""; position: absolute; left: 0; top: 3px; height: 12px; border-left: 1px solid #777; }
        .tabs .on { background: #fff; color: #000; border: 1px solid #000; border-top-color: #fff; margin-top: -1px; height: 19px; padding: 0 9px; }
        .tabs sub { color: #f00; font-size: 9px; line-height: 9px; margin-left: 1px; vertical-align: -3px; }
        .links { margin-left: auto; display: flex; gap: 15px; padding: 4px 13px 0 0; }
        .links a { display: flex; align-items: center; gap: 2px; color: #000; text-decoration: none; --icon: 15px; white-space: nowrap; }
      </style>
      <div class="side">
        <button aria-label="Закрыть"><svg width="7" height="7" stroke="#000" stroke-width="2"><path d="M1 1l5 5M6 1L1 6"/></svg></button>
        <span>Инструменты</span>
      </div>
      <div class="main">
        <div class="data">
          <history-table></history-table>
          <div class="bar">
            <button aria-label="Вверх"><svg width="7" height="4"><path d="M0 4l3.500-4L7 4z" fill="#444"/></svg></button>
            <button class="thumb" aria-label="Прокрутка"><svg width="8" height="8" stroke="#777"><path d="M0 1.500h8M0 4.500h8M0 7.500h8"/></svg></button>
            <button aria-label="Вниз"><svg width="7" height="4"><path d="M0 0l3.500 4L7 0z" fill="#444"/></svg></button>
          </div>
        </div>
        <div class="tabs">
          ${tabs.map((t, i) => `<button class="${i === 2 ? 'on' : ''}">${t}${i === 4 ? '<sub>7</sub>' : ''}</button>`).join('')}
          <div class="links">${links.map(l => `<a href="#"><mt-icon name="${l[0]}"></mt-icon>${l[1]}</a>`).join('')}</div>
        </div>
      </div>`;
  }
}
customElements.define('terminal-panel', TerminalPanel);

class StatusBar extends HTMLElement {
  connectedCallback() {
    this.attachShadow({ mode: 'open' }).innerHTML = `
      <style>
        :host { display: grid; grid-template-columns: 679fr 156fr 69fr 71fr 70fr 67fr 69fr 66fr 119fr; height: 23px; align-items: center; border-top: 1px solid #fff; }
        span { height: 18px; line-height: 18px; padding-left: 5px; border-left: 1px solid #a0a0a0; white-space: nowrap; }
        .hint { border: 0; padding-left: 2px; }
        mt-icon { --icon: 15px; vertical-align: -3px; margin-right: 5px; }
      </style>
      <span class="hint">Для вызова справки нажмите F1</span><span>Default</span><span></span><span></span><span></span><span></span><span></span><span></span>
      <span><mt-icon name="signal"></mt-icon>198.96 ms</span>`;
  }
}
customElements.define('status-bar', StatusBar);

class TaskBar extends HTMLElement {
  connectedCallback() {
    const apps = [['excel', ''], ['word', ''], ['calc', ''], ['folder', ''], ['opera', 'run'], ['logo', 'run on'], ['wifi', 'run']];
    const tray = ['shield', 'wifi', 'usb', 'four', 'flag', 'net', 'speaker', 'plug'];
    this.attachShadow({ mode: 'open' }).innerHTML = `
      <style>
        :host { display: flex; height: 40px; box-sizing: border-box; align-items: center; border-top: 1px solid #10284a; color: #fff; font-size: 12px;
          background: linear-gradient(#4c6a94 0, #34517c 2px, #304d78 50%, #032457 50%, #022050 100%); }
        button { box-sizing: border-box; border: 1px solid transparent; background: none; padding: 0; display: grid; place-items: center; }
        .start { --icon: 39px; width: 56px; height: 39px; }
        .app { --icon: 30px; width: 59px; height: 38px; margin-left: 3px; border-radius: 3px; }
        .app.run { border-color: #6d86aa; background: rgba(255, 255, 255, .08); }
        .app.on { --icon: 28px; background: linear-gradient(135deg, #b4c4d8, #6b83a8); border-color: #c4d0e0; }
        .tray { margin-left: auto; display: flex; align-items: center; gap: 8px; --icon: 16px; }
        .lang { margin: 0 8px 4px 0; }
        time { display: grid; text-align: center; line-height: 17px; width: 78px; margin-left: -2px; }
        .desk { width: 14px; height: 39px; margin-left: -8px; border: 1px solid #6d86aa; background: rgba(0, 0, 0, .25); }
      </style>
      <button class="start" aria-label="Пуск"><mt-icon name="orb"></mt-icon></button>
      ${apps.map(a => `<button class="app ${a[1]}" aria-label="${a[0]}"><mt-icon name="${a[0]}"></mt-icon></button>`).join('')}
      <div class="tray">
        <span class="lang">EN</span>
        ${tray.map(t => `<mt-icon name="${t}"></mt-icon>`).join('')}
        <time datetime="2021-05-26T17:04"><span>17:04</span><span>26.05.2021</span></time>
        <button class="desk" aria-label="Рабочий стол"></button>
      </div>`;
  }
}
customElements.define('task-bar', TaskBar);

class TerminalApp extends HTMLElement {
  connectedCallback() {
    this.attachShadow({ mode: 'open' }).innerHTML = `
      <style>
        :host { display: flex; flex-direction: column; min-height: 100vh; overflow: hidden; }
        .charts { flex: 1; display: grid; grid-template-columns: 780fr 586fr; min-height: 480px; padding-top: 1px; }
      </style>
      <title-bar></title-bar>
      <menu-bar></menu-bar>
      <tool-bar></tool-bar>
      <main class="charts">
        <chart-window active caption="MESM21,M1"><footprint-chart></footprint-chart></chart-window>
        <chart-window caption="EPM21,M1"><candle-chart></candle-chart></chart-window>
      </main>
      <chart-tabs></chart-tabs>
      <terminal-panel></terminal-panel>
      <status-bar></status-bar>
      <task-bar></task-bar>`;
  }
}
customElements.define('terminal-app', TerminalApp);
</script>
</body>
</html>
